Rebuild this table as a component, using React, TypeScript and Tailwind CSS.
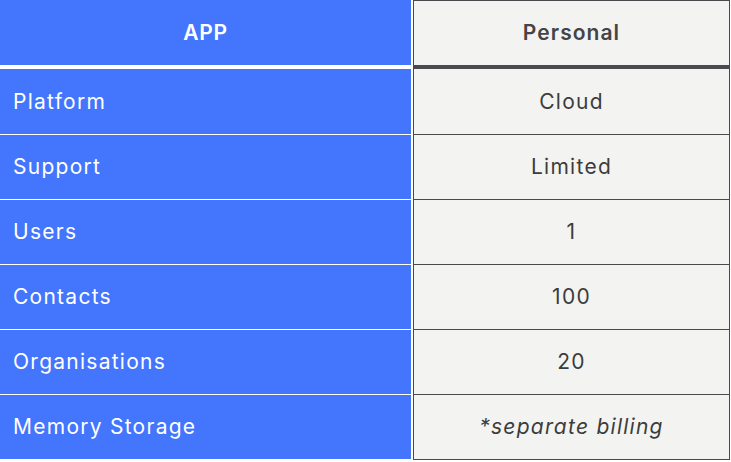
const rows = [
  { label: "Platform", value: "Cloud" },
  { label: "Support", value: "Limited" },
  { label: "Users", value: "1" },
  { label: "Contacts", value: "100" },
  { label: "Organisations", value: "20" },
  { label: "Memory Storage", value: "*separate billing", italic: true },
];

export default function App() {
  return (
    <div className="h-[462px] w-[731px] bg-white font-['Inter',sans-serif]">
      {/* header */}
      <div className="flex h-[69px]">
        <div className="flex h-[65px] w-[411px] items-center justify-center bg-[#4375fd] text-[21px] font-semibold tracking-[0.03em] text-white">
          APP
        </div>
        <div className="ml-[2px] flex w-[317px] items-center justify-center border-x border-t border-b-4 border-[#4a4a4e] bg-[#f3f4f2] text-[21px] font-semibold tracking-[0.05em] text-[#444446]">
          Personal
        </div>
      </div>

      {rows.map((row, i) => (
        <div key={row.label} className={`flex ${i === 0 ? "h-[66px]" : "h-[65px]"}`}>
          <div className="flex w-[411px] items-center border-b border-white bg-[#4375fd] pl-[13px] text-[21px] tracking-[0.06em] text-white">
            {row.label}
          </div>
          <div
            className={`ml-[2px] flex w-[317px] items-center justify-center border-x border-b border-[#4a4a4e] bg-[#f3f4f2] text-[21px] tracking-[0.06em] text-[#3c3c3c] ${
              row.italic ? "italic" : ""
            }`}
          >
            {row.value}
          </div>
        </div>
      ))}
    </div>
  );
}
